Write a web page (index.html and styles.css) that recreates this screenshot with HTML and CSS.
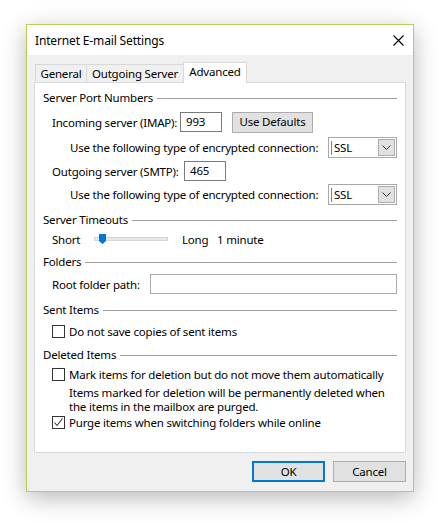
FILE: index.html
```html
<!DOCTYPE html>
<html>
<head>
<meta charset="utf-8">
<link rel="stylesheet" href="styles.css">
</head>
<body>
<div class="window">
  <div class="titlebar">
    <span class="title">Internet E-mail Settings</span>
    <svg class="close" width="11" height="11" viewBox="0 0 11 11"><path d="M0.5 0.5L10.5 10.5M10.5 0.5L0.5 10.5" stroke="#000" stroke-width="1.1" fill="none"/></svg>
  </div>
  <div class="body">
    <div class="tabs">
      <div class="tab">General</div>
      <div class="tab">Outgoing Server</div>
      <div class="tab active">Advanced</div>
    </div>
    <div class="panel">
      <div class="heading"><span>Server Port Numbers</span><i></i></div>
      <div class="row r-in">
        <span class="lbl l-in">Incoming server (IMAP):</span>
        <span class="input port">993</span>
        <span class="btn defaults">Use Defaults</span>
      </div>
      <div class="row r-enc1">
        <span class="lbl enc">Use the following type of encrypted connection:</span>
        <span class="select"><span class="caret"></span>SSL<span class="drop"><svg width="9" height="5" viewBox="0 0 9 5"><path d="M0.5 0.5L4.5 4.5L8.5 0.5" stroke="#333" fill="none"/></svg></span></span>
      </div>
      <div class="row r-out">
        <span class="lbl l-out">Outgoing server (SMTP):</span>
        <span class="input port">465</span>
      </div>
      <div class="row r-enc2">
        <span class="lbl enc">Use the following type of encrypted connection:</span>
        <span class="select"><span class="caret"></span>SSL<span class="drop"><svg width="9" height="5" viewBox="0 0 9 5"><path d="M0.5 0.5L4.5 4.5L8.5 0.5" stroke="#333" fill="none"/></svg></span></span>
      </div>
      <div class="heading h-to"><span>Server Timeouts</span><i></i></div>
      <div class="row r-slide">
        <span class="lbl short">Short</span>
        <span class="slider"><span class="thumb"><svg width="7" height="10" viewBox="0 0 7 10"><path d="M0 0H7V7L3.5 10L0 7Z" fill="#0078d7"/></svg></span></span>
        <span class="long">Long</span>
        <span class="minute">1 minute</span>
      </div>
      <div class="heading h-fo"><span>Folders</span><i></i></div>
      <div class="row r-root">
        <span class="lbl l-root">Root folder path:</span>
        <span class="input root"></span>
      </div>
      <div class="heading h-si"><span>Sent Items</span><i></i></div>
      <div class="row r-cb1">
        <span class="cb"></span><span>Do not save copies of sent items</span>
      </div>
      <div class="heading h-di"><span>Deleted Items</span><i></i></div>
      <div class="row r-cb2">
        <span class="cb"></span><span>Mark items for deletion but do not move them automatically</span>
      </div>
      <div class="desc"><div>Items marked for deletion will be permanently deleted when</div><div>the items in the mailbox are purged.</div></div>
      <div class="row r-cb3">
        <span class="cb"><svg width="11" height="11" viewBox="0 0 11 11"><path d="M1.5 5.5L4 8.5L9.5 1.5" stroke="#333" stroke-width="1.1" fill="none"/></svg></span><span>Purge items when switching folders while online</span>
      </div>
    </div>
    <div class="buttons">
      <span class="btn ok">OK</span>
      <span class="btn cancel">Cancel</span>
    </div>
  </div>
</div>
</body>
</html>
```

FILE: styles.css
```css
* { box-sizing: border-box; }
html, body { margin: 0; padding: 0; background: #fff; }
body {
  font-family: "Noto Sans", "Open Sans", sans-serif;
  font-size: 11.5px;
  letter-spacing: -0.2px;
  color: #000;
  padding: 24px 0 0 26px;
  width: 442px;
  height: 523px;
  overflow: hidden;
  white-space: nowrap;
}
.window {
  width: 388px;
  height: 468px;
  border: 1px solid #b7cf52;
  background: #f0f0f0;
  box-shadow: 0 6px 22px rgba(0,0,0,0.28);
  display: flex;
  flex-direction: column;
}
.titlebar {
  height: 30px;
  background: #fff;
  display: flex;
  align-items: center;
  padding: 0 9px 0 8px;
}
.title { flex: 1; font-size: 12px; letter-spacing: -0.15px; }
.close { display: block; }
.body {
  flex: 1;
  padding: 7px 7px 0 7px;
  display: flex;
  flex-direction: column;
}
.tabs {
  display: flex;
  height: 20px;
  padding-left: 1px;
  align-items: flex-end;
  position: relative;
  z-index: 2;
}
.tab {
  height: 18px;
  border: 1px solid #d9d9d9;
  border-bottom: none;
  border-right: none;
  background: #f0f0f0;
  display: flex;
  align-items: center;
  justify-content: center;
  line-height: 14px;
}
.tab:first-child { width: 51px; }
.tab:nth-child(2) { width: 97px; }
.tab.active {
  width: 64px;
  height: 21px;
  background: #fff;
  border-right: 1px solid #d9d9d9;
  margin-bottom: -1px;
  padding-bottom: 3px;
}
.panel {
  height: 371px;
  background: #fff;
  border: 1px solid #d9d9d9;
  padding: 7px 8px 0 8px;
}
.heading {
  display: flex;
  align-items: center;
  height: 16px;
  line-height: 16px;
}
.heading i {
  flex: 1;
  height: 1px;
  background: #a0a0a0;
  margin-left: 4px;
}
.row {
  display: flex;
  align-items: center;
  padding-left: 9px;
}
.lbl { white-space: nowrap; }
.l-in { width: 128px; }
.l-out { width: 132px; }
.l-root { width: 98px; }
.r-in { height: 20px; margin-top: 6px; }
.r-enc1 { height: 21px; margin-top: 5px; }
.r-out { height: 20px; margin-top: 3px; }
.r-enc2 { height: 21px; margin-top: 3px; }
.enc { padding-left: 18px; flex: 1; }
.input {
  height: 20px;
  border: 1px solid #7a7a7a;
  background: #fff;
  display: flex;
  align-items: center;
  padding-left: 5px;
  line-height: 14px;
}
.port { width: 42px; }
.btn {
  display: flex;
  align-items: center;
  justify-content: center;
  background: #e1e1e1;
  border: 1px solid #adadad;
  height: 21px;
  line-height: 14px;
}
.defaults { width: 81px; margin-left: 10px; }
.select {
  width: 69px;
  height: 21px;
  border: 1px solid #a8a8a8;
  display: flex;
  align-items: center;
  padding-left: 2px;
  position: relative;
}
.caret { width: 1px; height: 14px; background: #3c8fe0; margin-right: 2px; }
.drop {
  position: absolute;
  right: 1px;
  top: 1px;
  width: 17px;
  height: 17px;
  background: #e1e1e1;
  border: 1px solid #adadad;
  display: flex;
  align-items: center;
  justify-content: center;
}
.h-to { margin-top: 7px; }
.r-slide { height: 16px; margin-top: 3px; }
.short { width: 42px; }
.slider {
  width: 74px;
  height: 4px;
  background: #e7eaea;
  border: 1px solid #d6d6d6;
  position: relative;
}
.thumb { position: absolute; left: 4px; top: -4px; display: block; line-height: 0; }
.long { margin-left: 14px; width: 35px; }
.h-fo { margin-top: 7px; }
.r-root { height: 20px; margin-top: 4px; }
.root { flex: 1; border-color: #ababab; }
.h-si { margin-top: 8px; }
.r-cb1 { height: 16px; margin-top: 5px; }
.cb {
  width: 13px;
  height: 13px;
  border: 1px solid #333;
  background: #fff;
  margin-right: 4px;
  display: flex;
  align-items: center;
  justify-content: center;
}
.h-di { margin-top: 8px; }
.r-cb2 { height: 16px; margin-top: 3px; }
.desc { padding-left: 26px; margin-top: 4px; }
.desc div { height: 14px; line-height: 14px; }
.r-cb3 { height: 16px; margin-top: 0px; }
.buttons {
  display: flex;
  justify-content: flex-end;
  margin-top: 8px;
}
.ok { width: 73px; height: 21px; border: 2px solid #0078d7; margin-right: 8px; }
.cancel { width: 73px; }
```
